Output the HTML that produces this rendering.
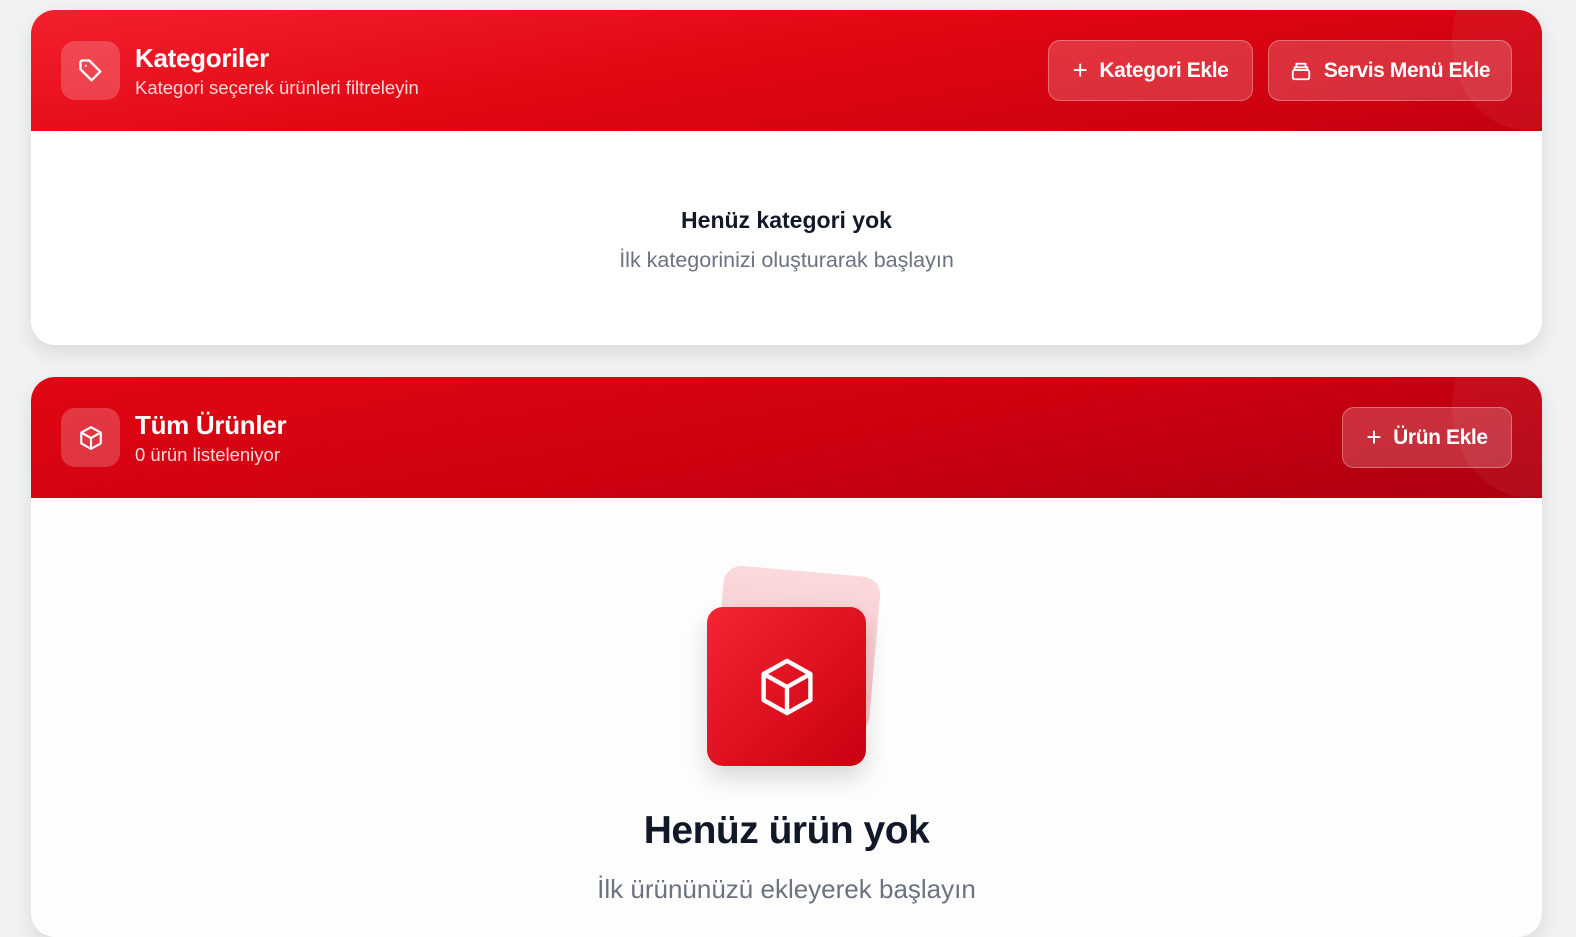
<!DOCTYPE html>
<html><head><meta charset="utf-8"><style>
*{box-sizing:border-box;margin:0;padding:0}
body{width:1576px;height:906px;overflow:hidden;background:#f1f2f4;font-family:"Liberation Sans",sans-serif;position:relative}
.card{position:absolute;left:31px;width:1511px;background:#fff;border-radius:24px;overflow:hidden;box-shadow:0 8px 20px rgba(0,0,0,.10)}
.hdr{position:relative;height:121px;background:linear-gradient(170deg,#f3202e 0%,#e30613 45%,#c4000f 100%);overflow:hidden}
.hdr2{background:linear-gradient(170deg,#e20613 0%,#cc0010 55%,#ad0010 100%)}
.circ{position:absolute;right:-60px;top:-60px;width:150px;height:180px;border-radius:50%;background:rgba(255,255,255,.05)}
.ib{position:absolute;left:30px;top:31px;width:59px;height:59px;border-radius:14px;background:rgba(255,255,255,.2);display:flex;align-items:center;justify-content:center}
.t{position:absolute;left:104px;top:33px;color:#fff;font-weight:bold;font-size:26px;letter-spacing:-.3px}
.s{position:absolute;left:104px;top:67px;color:#ffd6d9;font-size:18.5px}
.btn{position:absolute;top:30px;height:61px;border-radius:12px;background:rgba(255,255,255,.18);border:1px solid rgba(255,255,255,.3);color:#fff;font-weight:bold;font-size:21px;display:flex;align-items:center;justify-content:center;gap:12px;letter-spacing:-.4px}
.c{text-align:center;position:absolute;left:0;width:100%}
</style></head><body>
<div class="card" style="top:10px;height:335px">
 <div class="hdr"><div class="circ"></div>
  <div class="ib"><svg width="28" height="28" viewBox="0 0 24 24" fill="none" stroke="#fff" stroke-width="2" stroke-linejoin="round"><path d="M3 4v6.5l9.5 9.5 7.5-7.5L10.5 3H4z"/><circle cx="7.5" cy="7.5" r="1" fill="#fff" stroke="none"/></svg></div>
  <div class="t">Kategoriler</div><div class="s">Kategori seçerek ürünleri filtreleyin</div>
  <div class="btn" style="left:1017px;width:205px"><span style="font-weight:normal;font-size:26px">+</span>Kategori Ekle</div>
  <div class="btn" style="left:1237px;width:244px"><svg width="22" height="22" viewBox="0 0 24 24" fill="none" stroke="#fff" stroke-width="2" stroke-linejoin="round"><rect x="3" y="11" width="18" height="10" rx="2"/><path d="M5 11V8h14v3M7 8V4h10v4"/></svg>Servis Menü Ekle</div>
 </div>
 <div class="c" style="top:197px;font-size:23px;font-weight:bold;color:#111827">Henüz kategori yok</div>
 <div class="c" style="top:238px;font-size:21.5px;color:#6b7280">İlk kategorinizi oluşturarak başlayın</div>
</div>
<div class="card" style="top:377px;height:560px;background:#fdfdfd">
 <div class="hdr hdr2"><div class="circ"></div>
  <div class="ib"><svg width="26" height="26" viewBox="0 0 24 24" fill="none" stroke="#fff" stroke-width="2" stroke-linejoin="round"><path d="M12 2l9 5v10l-9 5-9-5V7z"/><path d="M3 7l9 5 9-5M12 12v10"/></svg></div>
  <div class="t">Tüm Ürünler</div><div class="s">0 ürün listeleniyor</div>
  <div class="btn" style="left:1311px;width:170px"><span style="font-weight:normal;font-size:26px">+</span>Ürün Ekle</div>
 </div>
 <div style="position:absolute;left:687px;top:194px;width:157px;height:157px;border-radius:18px;background:linear-gradient(180deg,#fbd9dc,#f6c1c6);transform:rotate(5deg)"></div>
 <div style="position:absolute;left:676px;top:230px;width:159px;height:159px;border-radius:16px;background:linear-gradient(135deg,#f42533,#c9000f);box-shadow:0 12px 24px rgba(0,0,0,.15);display:flex;align-items:center;justify-content:center"><svg width="66" height="66" viewBox="0 0 24 24" fill="none" stroke="#fff" stroke-width="1.6" stroke-linejoin="round"><path d="M12 2.5l8.5 4.75v9.5L12 21.5l-8.5-4.75v-9.5z"/><path d="M3.5 7.25L12 12l8.5-4.75M12 12v9.5"/></svg></div>
 <div class="c" style="top:432px;font-size:39px;font-weight:bold;color:#111827;letter-spacing:-.5px">Henüz ürün yok</div>
 <div class="c" style="top:497px;font-size:26px;color:#6b7280">İlk ürününüzü ekleyerek başlayın</div>
</div>
</body></html>
